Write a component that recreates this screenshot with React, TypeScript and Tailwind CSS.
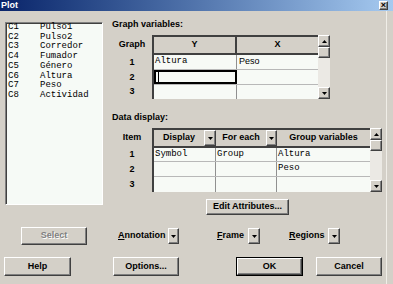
import React from 'react'

const raised =
  'bg-[#d4d0c8] border border-t-white border-l-white border-r-[#404040] border-b-[#404040] shadow-[inset_-1px_-1px_0_#808080]'
const mono = "font-['Liberation_Mono',monospace] text-[9px] text-black"
const label = 'font-bold text-[9px] text-black'

function Arrow(props: { up?: boolean }) {
  return (
    <svg width="5" height="3" viewBox="0 0 5 3">
      <path d={props.up ? 'M2.5 0L5 3H0Z' : 'M0 0H5L2.5 3Z'} fill="#000" />
    </svg>
  )
}

function Scrollbar() {
  return (
    <div className="flex flex-col w-[12px] h-[64px] bg-[#ebe9e4]">
      <div className={`${raised} h-[12px] flex items-center justify-center`}>
        <Arrow up />
      </div>
      <div className={`${raised} h-[11px]`} />
      <div className="flex-1" />
      <div className={`${raised} h-[12px] flex items-center justify-center`}>
        <Arrow />
      </div>
    </div>
  )
}

function DropDown(props: { className?: string }) {
  return (
    <div className={`${raised} flex items-center justify-center ${props.className ?? ''}`}>
      <Arrow />
    </div>
  )
}

function Button(props: { children: React.ReactNode; className?: string }) {
  return (
    <div className={`${raised} flex items-center justify-center ${label} ${props.className ?? ''}`}>
      {props.children}
    </div>
  )
}

const columns = [
  ['C1', 'Pulso1'],
  ['C2', 'Pulso2'],
  ['C3', 'Corredor'],
  ['C4', 'Fumador'],
  ['C5', 'Género'],
  ['C6', 'Altura'],
  ['C7', 'Peso'],
  ['C8', 'Actividad'],
]

function RowLabels(props: { title: string; rows: number[] }) {
  return (
    <div className={`w-[40px] flex flex-col items-center ${label}`}>
      <div className="h-[20px] flex items-center">{props.title}</div>
      {props.rows.map((h, i) => (
        <div key={i} className="flex items-center" style={{ height: h }}>
          {i + 1}
        </div>
      ))}
    </div>
  )
}

function GraphTable() {
  return (
    <div className="flex">
      <RowLabels title="Graph" rows={[15, 15, 14]} />
      <div className="flex flex-col w-[166px] border-l-2 border-[#404040]">
        <div className={`flex h-[20px] bg-[#d4d0c8] border-t-2 border-b-2 border-[#404040] ${label}`}>
          <div className="w-[83px] border-r-2 border-[#404040] flex items-center justify-center">Y</div>
          <div className="flex-1 flex items-center justify-center">X</div>
        </div>
        <div className="flex h-[15px] bg-[#f7faf6] border-b border-[#b8b8b8]">
          <div className={`w-[83px] border-r border-[#909090] pl-[1px] flex items-center ${mono}`}>Altura</div>
          <div className="flex-1 pl-[2px] flex items-center text-[9px] text-black">Peso</div>
        </div>
        <div className="flex h-[15px] bg-[#f7faf6] border-b border-[#b8b8b8]">
          <div className="w-[83px] border-2 border-black flex items-center pl-[2px]">
            <div className="w-px h-[10px] bg-black" />
          </div>
          <div className="flex-1" />
        </div>
        <div className="flex h-[14px] bg-[#f7faf6]">
          <div className="w-[83px] border-r border-[#909090]" />
          <div className="flex-1" />
        </div>
      </div>
      <Scrollbar />
    </div>
  )
}

function DataTable() {
  return (
    <div className="flex">
      <RowLabels title="Item" rows={[14, 15, 15]} />
      <div className="flex flex-col w-[218px] border-l-2 border-[#404040]">
        <div className={`flex h-[20px] bg-[#d4d0c8] border-t-2 border-b-2 border-[#404040] ${label}`}>
          <div className="w-[50px] flex items-center justify-center">Display</div>
          <DropDown className="w-[12px] h-full" />
          <div className="w-[50px] flex items-center justify-center">For each</div>
          <DropDown className="w-[11px] h-full" />
          <div className="flex-1 flex items-center justify-center">Group variables</div>
        </div>
        {[
          ['Symbol', 'Group', 'Altura', 14],
          ['', '', 'Peso', 15],
          ['', '', '', 15],
        ].map((r, i) => (
          <div
            key={i}
            className={`flex bg-[#f7faf6] ${i < 2 ? 'border-b border-[#b8b8b8]' : ''}`}
            style={{ height: r[3] as number }}
          >
            <div className={`w-[62px] border-r border-[#909090] pl-[1px] flex items-center ${mono}`}>{r[0]}</div>
            <div className={`w-[61px] border-r border-[#909090] pl-[1px] flex items-center ${mono}`}>{r[1]}</div>
            <div className={`flex-1 pl-[1px] flex items-center ${mono}`}>{r[2]}</div>
          </div>
        ))}
      </div>
      <Scrollbar />
    </div>
  )
}

export default function App() {
  return (
    <div className="w-[393px] h-[284px] overflow-hidden bg-[#d4d0c8] font-['Liberation_Sans',Arial,sans-serif] flex flex-col">
      <div className="h-[11px] shrink-0 flex items-center bg-gradient-to-r from-[#0a246a] to-[#a6caf0]">
        <span className="ml-[1px] text-white font-bold text-[9px] leading-none">Plot</span>
        <div className={`${raised} ml-auto mr-[5px] w-[9px] h-[9px] flex items-center justify-center`}>
          <span className="text-[9px] font-bold leading-none text-black">×</span>
        </div>
      </div>
      <div className="flex-1 flex flex-col border-r border-[#f0eee8] w-[387px]">
        <div className="flex">
          <div className="ml-[5px] mt-[11px] w-[98px] h-[183px] bg-[#f6faf6] border border-t-[#808080] border-l-[#808080] border-r-white border-b-white shadow-[inset_1px_1px_0_#404040]">
            {columns.map(([c, n]) => (
              <div key={c} className={`flex leading-[9.7px] pl-[2px] ${mono}`}>
                <span className="w-[32px]">{c}</span>
                <span>{n}</span>
              </div>
            ))}
          </div>
          <div className="ml-[9px] flex flex-col">
            <div className={`mt-[8px] h-[10px] leading-[10px] ${label}`}>Graph variables:</div>
            <div className="mt-[6px]">
              <GraphTable />
            </div>
            <div className={`mt-[13px] h-[10px] leading-[10px] ${label}`}>Data display:</div>
            <div className="mt-[6px]">
              <DataTable />
            </div>
            <Button className="mt-[7px] ml-[94px] w-[83px] h-[16px]">Edit Attributes...</Button>
          </div>
        </div>
        <div className="mt-[12px] h-[18px] flex items-center">
          <div className={`${raised} ml-[21px] w-[66px] h-[18px] flex items-center justify-center font-bold text-[9px] text-[#808080] [text-shadow:1px_1px_0_#fff]`}>
            Select
          </div>
          <div className={`ml-[31px] w-[61px] flex items-center justify-between ${label}`}>
            <span>
              <span className="underline">A</span>nnotation
            </span>
            <DropDown className="w-[11px] h-[16px]" />
          </div>
          <div className={`ml-[38px] w-[43px] flex items-center justify-between ${label}`}>
            <span>
              <span className="underline">F</span>rame
            </span>
            <DropDown className="w-[12px] h-[16px]" />
          </div>
          <div className={`ml-[29px] w-[51px] flex items-center justify-between ${label}`}>
            <span>
              <span className="underline">R</span>egions
            </span>
            <DropDown className="w-[12px] h-[16px]" />
          </div>
        </div>
        <div className="mt-[12px] h-[19px] flex">
          <Button className="ml-[4px] w-[67px] h-[19px]">Help</Button>
          <Button className="ml-[42px] w-[66px] h-[19px]">Options...</Button>
          <div className="ml-[57px] w-[67px] h-[19px] border border-black">
            <Button className="w-full h-full">OK</Button>
          </div>
          <Button className="ml-[13px] w-[66px] h-[19px]">Cancel</Button>
        </div>
      </div>
    </div>
  )
}
